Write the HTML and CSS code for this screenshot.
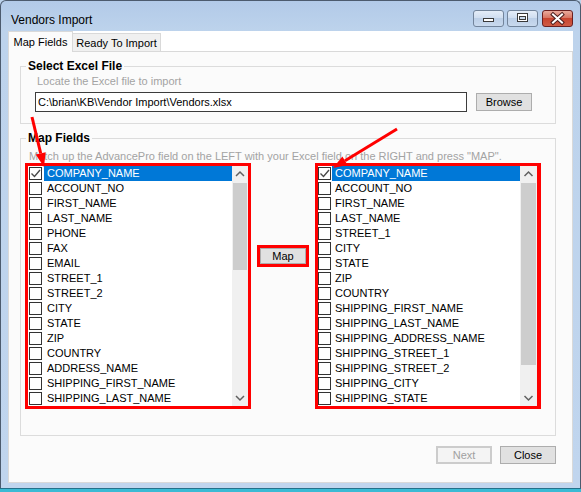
FILE: index.html
```html
<!DOCTYPE html>
<html>
<head>
<meta charset="utf-8">
<title>Vendors Import</title>
<link rel="stylesheet" href="styles.css">
</head>
<body>
<div class="window">
  <div class="titlebar">
    <span class="title">Vendors Import</span>
    <div class="caption">
      <div class="cbtn min"><svg width="29" height="15" viewBox="1 1 29 15"><rect x="10.5" y="8.5" width="10" height="3" fill="#fff" stroke="#3a3a3a"/></svg></div>
      <div class="cbtn max"><svg width="29" height="15" viewBox="1 1 29 15"><rect x="10.5" y="3.5" width="10" height="8" fill="#fff" stroke="#3a3a3a"/><rect x="12.5" y="6.5" width="6" height="3" fill="#c9d8ea" stroke="#3a3a3a"/></svg></div>
      <div class="cbtn cls"><svg width="29" height="15" viewBox="1 1 29 15"><path d="M11 4.5 L20 12.5 M20 4.5 L11 12.5" stroke="#4a1c1c" stroke-width="4" stroke-linecap="square" fill="none"/><path d="M11 4.5 L20 12.5 M20 4.5 L11 12.5" stroke="#fff" stroke-width="2" stroke-linecap="square" fill="none"/></svg></div>
    </div>
  </div>
  <div class="client">
    <div class="tabs">
      <div class="tab active">Map Fields</div>
      <div class="tab second">Ready To Import</div>
    </div>
    <div class="panel">
      <div class="group g1">
        <div class="legend">Select Excel File</div>
        <div class="hint h1">Locate the Excel file to import</div>
        <div class="filerow">
          <div class="textbox">C:\brian\KB\Vendor Import\Vendors.xlsx</div>
          <div class="btn browse">Browse</div>
        </div>
      </div>
      <div class="group g2">
        <div class="legend">Map Fields</div>
        <div class="hint h2">Match up the AdvancePro field on the LEFT with your Excel field on the RIGHT and press "MAP".</div>
        <div class="lists">
          <div class="listbox">
            <div class="items">
              <div class="row sel"><span class="cb"><svg width="11" height="11" viewBox="0 0 11 11"><polyline points="1.5,5.5 4.5,8.5 10,2" fill="none" stroke="#4a4a4a" stroke-width="1.4"/></svg></span><span class="lbl">COMPANY_NAME</span></div>
              <div class="row"><span class="cb"></span><span class="lbl">ACCOUNT_NO</span></div>
              <div class="row"><span class="cb"></span><span class="lbl">FIRST_NAME</span></div>
              <div class="row"><span class="cb"></span><span class="lbl">LAST_NAME</span></div>
              <div class="row"><span class="cb"></span><span class="lbl">PHONE</span></div>
              <div class="row"><span class="cb"></span><span class="lbl">FAX</span></div>
              <div class="row"><span class="cb"></span><span class="lbl">EMAIL</span></div>
              <div class="row"><span class="cb"></span><span class="lbl">STREET_1</span></div>
              <div class="row"><span class="cb"></span><span class="lbl">STREET_2</span></div>
              <div class="row"><span class="cb"></span><span class="lbl">CITY</span></div>
              <div class="row"><span class="cb"></span><span class="lbl">STATE</span></div>
              <div class="row"><span class="cb"></span><span class="lbl">ZIP</span></div>
              <div class="row"><span class="cb"></span><span class="lbl">COUNTRY</span></div>
              <div class="row"><span class="cb"></span><span class="lbl">ADDRESS_NAME</span></div>
              <div class="row"><span class="cb"></span><span class="lbl">SHIPPING_FIRST_NAME</span></div>
              <div class="row"><span class="cb"></span><span class="lbl">SHIPPING_LAST_NAME</span></div>
            </div>
            <div class="sb">
              <div class="arrow"><svg width="16" height="17" viewBox="0 0 16 17"><polyline points="4,10 8,6 12,10" fill="none" stroke="#606060" stroke-width="1.5"/></svg></div>
              <div class="thumb t-left"></div>
              <div class="fill"></div>
              <div class="arrow"><svg width="16" height="17" viewBox="0 0 16 17"><polyline points="4,7 8,11 12,7" fill="none" stroke="#606060" stroke-width="1.5"/></svg></div>
            </div>
          </div>
          <div class="mapwrap"><div class="btn map">Map</div></div>
          <div class="listbox r">
            <div class="items">
              <div class="row sel"><span class="cb"><svg width="11" height="11" viewBox="0 0 11 11"><polyline points="1.5,5.5 4.5,8.5 10,2" fill="none" stroke="#4a4a4a" stroke-width="1.4"/></svg></span><span class="lbl">COMPANY_NAME</span></div>
              <div class="row"><span class="cb"></span><span class="lbl">ACCOUNT_NO</span></div>
              <div class="row"><span class="cb"></span><span class="lbl">FIRST_NAME</span></div>
              <div class="row"><span class="cb"></span><span class="lbl">LAST_NAME</span></div>
              <div class="row"><span class="cb"></span><span class="lbl">STREET_1</span></div>
              <div class="row"><span class="cb"></span><span class="lbl">CITY</span></div>
              <div class="row"><span class="cb"></span><span class="lbl">STATE</span></div>
              <div class="row"><span class="cb"></span><span class="lbl">ZIP</span></div>
              <div class="row"><span class="cb"></span><span class="lbl">COUNTRY</span></div>
              <div class="row"><span class="cb"></span><span class="lbl">SHIPPING_FIRST_NAME</span></div>
              <div class="row"><span class="cb"></span><span class="lbl">SHIPPING_LAST_NAME</span></div>
              <div class="row"><span class="cb"></span><span class="lbl">SHIPPING_ADDRESS_NAME</span></div>
              <div class="row"><span class="cb"></span><span class="lbl">SHIPPING_STREET_1</span></div>
              <div class="row"><span class="cb"></span><span class="lbl">SHIPPING_STREET_2</span></div>
              <div class="row"><span class="cb"></span><span class="lbl">SHIPPING_CITY</span></div>
              <div class="row"><span class="cb"></span><span class="lbl">SHIPPING_STATE</span></div>
            </div>
            <div class="sb">
              <div class="arrow"><svg width="17" height="17" viewBox="0 0 17 17"><polyline points="4.5,10 8.5,6 12.5,10" fill="none" stroke="#606060" stroke-width="1.5"/></svg></div>
              <div class="thumb t-right"></div>
              <div class="fill"></div>
              <div class="arrow"><svg width="17" height="17" viewBox="0 0 17 17"><polyline points="4.5,7 8.5,11 12.5,7" fill="none" stroke="#606060" stroke-width="1.5"/></svg></div>
            </div>
          </div>
        </div>
      </div>
      <div class="actions">
        <div class="btn next">Next</div>
        <div class="btn">Close</div>
      </div>
    </div>
  </div>
  <div class="frame-bottom"></div>
</div>
<svg class="arrows" width="581" height="492" viewBox="0 0 581 492">
  <line x1="32" y1="117" x2="40.7" y2="153.4" stroke="#f00" stroke-width="3"/>
  <polygon points="44,167 45.6,152.2 35.8,154.6" fill="#f00"/>
  <line x1="397" y1="129" x2="345" y2="160.7" stroke="#f00" stroke-width="3"/>
  <polygon points="333,168 347.6,165 342.4,156.4" fill="#f00"/>
</svg>
</body>
</html>
```

FILE: styles.css
```css
* { box-sizing: border-box; }
html, body { margin: 0; padding: 0; }
body {
  width: 581px;
  height: 492px;
  overflow: hidden;
  position: relative;
  font-family: "Liberation Sans", Arial, sans-serif;
  font-size: 11px;
  color: #000;
  background: #bcd3ec;
}
.window {
  width: 581px;
  height: 492px;
  display: flex;
  flex-direction: column;
  background: linear-gradient(180deg, #b2cae8 0, #bdd3ec 30px, #c0d5ee 100%);
  border: 1px solid #4c5b6e;
  border-bottom: 0;
  border-radius: 6px 6px 0 0;
}
.titlebar {
  height: 30px;
  flex: none;
  display: flex;
  justify-content: space-between;
  align-items: flex-start;
}
.title {
  font-size: 12px;
  line-height: 14px;
  margin: 12px 0 0 10px;
}
.caption {
  display: flex;
  margin: 9px 7px 0 0;
}
.cbtn {
  width: 31px;
  height: 17px;
  border: 1px solid #72849b;
  border-radius: 3px;
  background: linear-gradient(180deg, #e4edf8 0, #d0def0 45%, #bccfe7 50%, #c9daee 100%);
}
.cbtn svg { display: block; }
.cbtn.max { margin-left: 3px; }
.cbtn.cls {
  margin-left: 4px;
  border-color: #6b2020;
  background: linear-gradient(180deg, #eaab9d 0, #d87563 45%, #c8442f 50%, #cf5c45 100%);
}
.client {
  flex: 1;
  margin: 0 7px;
  background: #fff;
  display: flex;
  flex-direction: column;
}
.tabs {
  display: flex;
  align-items: flex-end;
  height: 21px;
  flex: none;
  margin-bottom: -1px;
  position: relative;
  z-index: 1;
}
.tab {
  height: 19px;
  border: 1px solid #d9d9d9;
  background: #f0f0f0;
  display: flex;
  align-items: center;
  justify-content: center;
  white-space: nowrap;
}
.tab.active {
  width: 65px;
  height: 21px;
  background: #fbfbfb;
  border-bottom: 0;
  padding-bottom: 1px;
}
.tab.second {
  width: 88px;
  border-left: 0;
}
.panel {
  flex: 1;
  border: 1px solid #d9d9d9;
  background: #fbfbfb;
  display: flex;
  flex-direction: column;
}
.group {
  border: 1px solid #dcdcdc;
  margin: 14px 16px 0 11px;
  display: flex;
  flex-direction: column;
  align-items: flex-start;
  flex: none;
}
.g1 { height: 58px; }
.g2 { height: 298px; }
.legend {
  font-weight: bold;
  font-size: 12px;
  line-height: 14px;
  margin: -8px 0 0 5px;
  padding: 0 2px;
  background: #fbfbfb;
}
.hint {
  color: #a3a3a3;
  line-height: 13px;
  white-space: nowrap;
}
.h1 { margin: 2px 0 0 16px; }
.h2 { margin: 5px 0 0 8px; }
.filerow {
  display: flex;
  align-items: center;
  margin: 4px 0 0 14px;
}
.textbox {
  width: 432px;
  height: 20px;
  border: 1px solid #3c3c3c;
  background: #fff;
  padding-left: 2px;
  line-height: 18px;
  white-space: nowrap;
}
.btn {
  display: flex;
  align-items: center;
  justify-content: center;
  background: #e1e1e1;
  border: 1px solid #adadad;
  font-size: 11px;
}
.browse {
  width: 56px;
  height: 18px;
  margin-left: 9px;
}
.lists {
  display: flex;
  align-items: flex-start;
  gap: 6px;
  margin-left: 4px;
}
.listbox {
  width: 226px;
  height: 246px;
  border: 3px solid #f00;
  display: flex;
}
.listbox.r { border-right-width: 4px; }
.items {
  flex: 1;
  background: #fff;
  overflow: hidden;
}
.row {
  display: flex;
  align-items: center;
  height: 15px;
}
.cb {
  width: 13px;
  height: 13px;
  border: 1px solid #333;
  background: #fff;
  margin-left: 1px;
  flex: none;
}
.listbox.r .cb { margin-left: 0; }
.cb svg { display: block; }
.lbl {
  flex: 1;
  margin-left: 2px;
  padding-left: 3px;
  height: 15px;
  line-height: 15px;
  white-space: nowrap;
}
.listbox.r .lbl { margin-left: 1px; }
.row.sel .lbl {
  background: #0078d7;
  color: #fff;
}
.sb {
  width: 16px;
  flex: none;
  background: #f0f0f0;
  display: flex;
  flex-direction: column;
}
.listbox.r .sb { width: 17px; }
.arrow { height: 17px; flex: none; }
.arrow svg { display: block; }
.thumb {
  margin: 0 1px;
  background: #cdcdcd;
  flex: none;
}
.t-left { height: 87px; }
.t-right { height: 182px; }
.sb .fill { flex: 1; }
.mapwrap {
  width: 52px;
  height: 22px;
  border: 3px solid #f00;
  margin-top: 82px;
  display: flex;
}
.map { flex: 1; }
.actions {
  display: flex;
  justify-content: flex-end;
  gap: 8px;
  margin: 10px 16px 0 0;
}
.actions .btn {
  width: 56px;
  height: 18px;
}
.actions .next {
  border: 2px solid #cccccc;
  background: #f4f4f4;
  color: #a0a0a0;
}
.frame-bottom {
  height: 9px;
  flex: none;
  margin: 0 -1px;
  background: linear-gradient(180deg, transparent 0, transparent 5px, #24708a 5px, #24708a 6px, #3bbad4 6px, #3bbad4 100%);
}
.arrows {
  position: absolute;
  left: 0;
  top: 0;
  pointer-events: none;
}
```
